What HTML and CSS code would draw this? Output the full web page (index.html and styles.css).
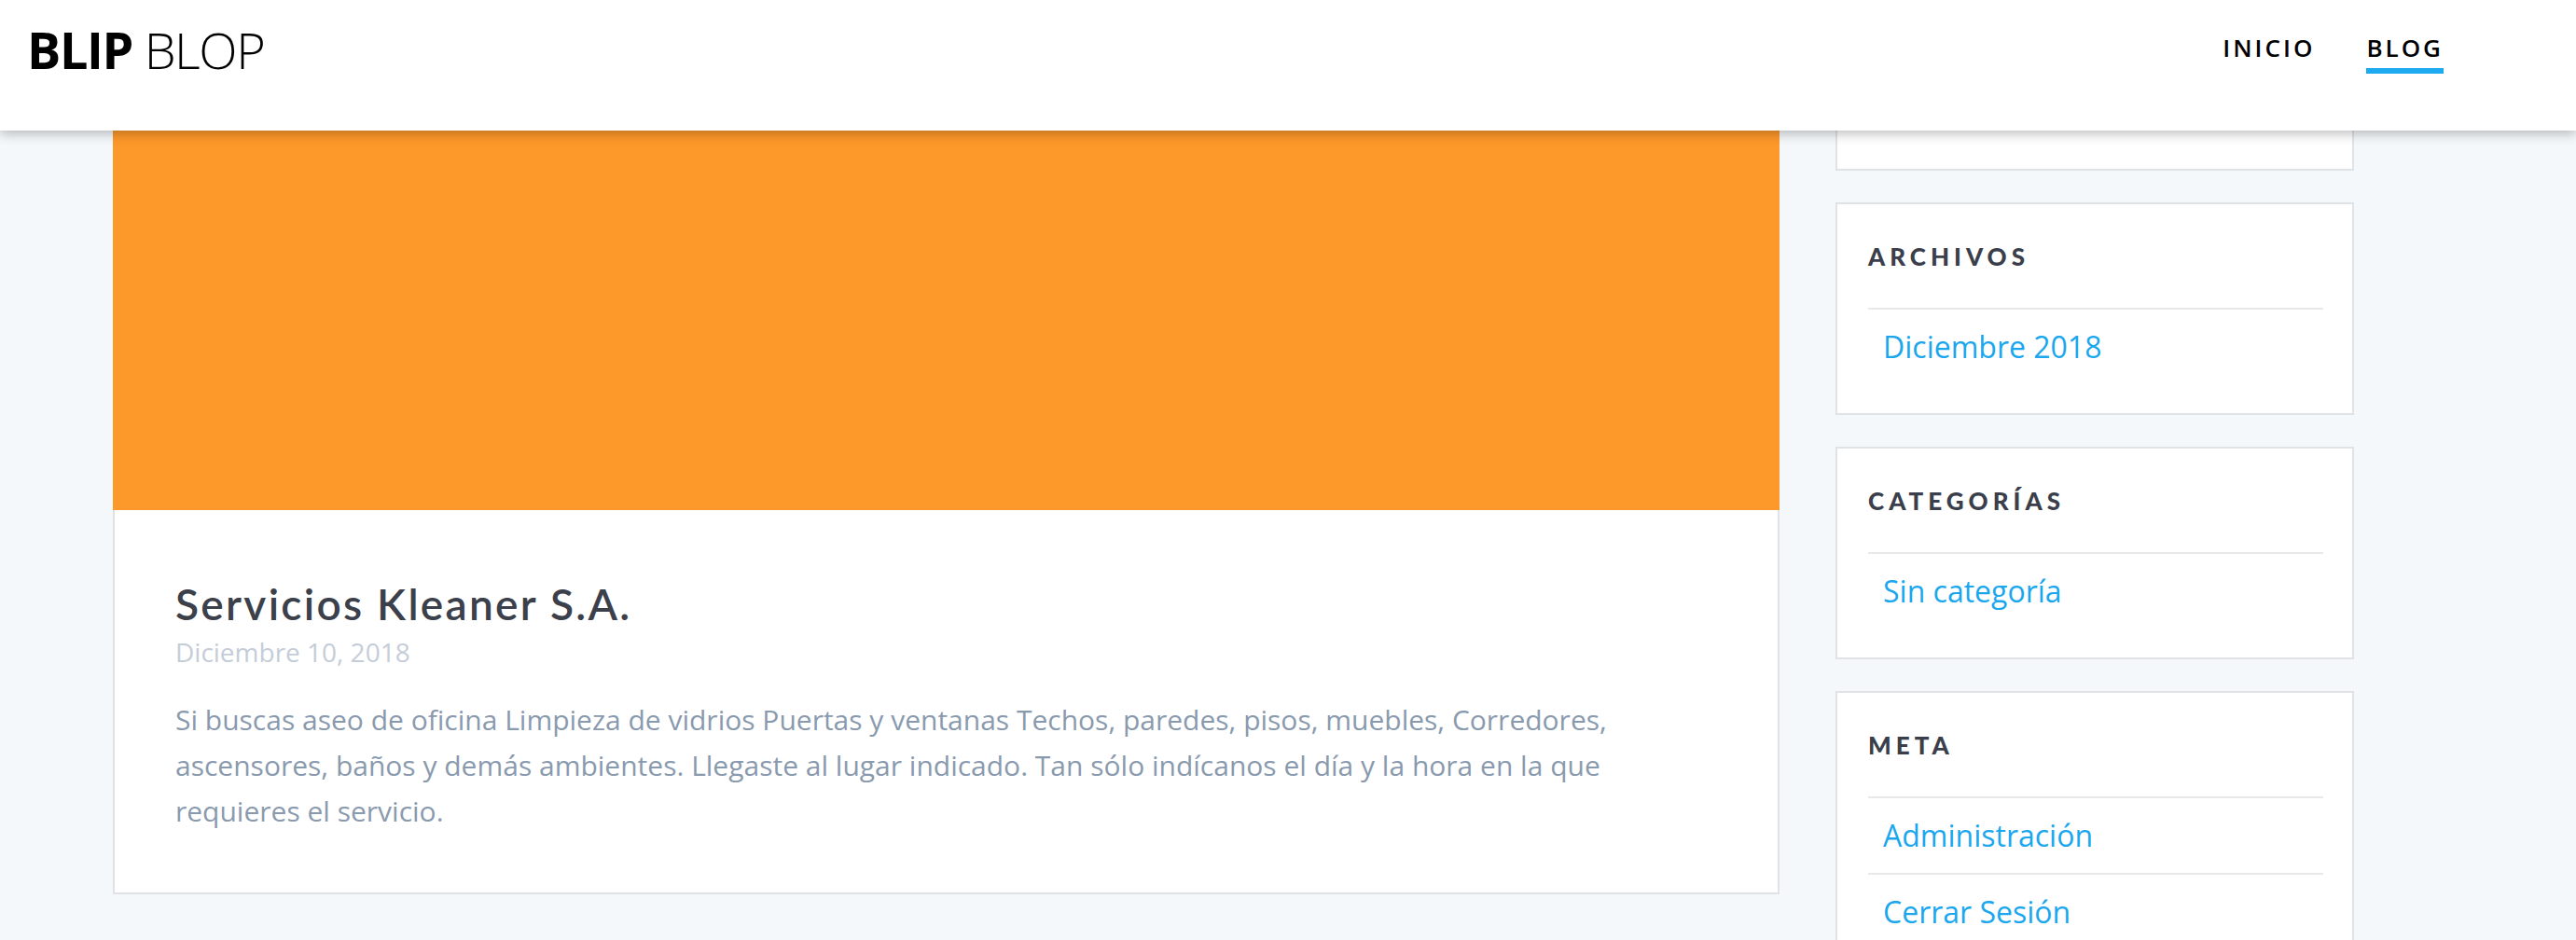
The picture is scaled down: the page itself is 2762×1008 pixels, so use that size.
FILE: index.html
```html
<!DOCTYPE html>
<html lang="es">
<head>
<meta charset="utf-8">
<title>Blog – BLIP BLOP</title>
<link rel="stylesheet" href="styles.css">
</head>
<body>
<header class="site-header">
  <a class="logo" href="#"><span class="logo-bold">BLIP</span> <span class="logo-light">BLOP</span></a>
  <nav class="nav">
    <a class="nav-link" href="#">INICIO</a>
    <a class="nav-link nav-link-active" href="#">BLOG</a>
  </nav>
</header>
<div class="page">
  <main class="main">
    <article class="post">
      <div class="post-image"></div>
      <div class="post-body">
        <h2 class="post-title">Servicios Kleaner S.A.</h2>
        <div class="post-date">Diciembre 10, 2018</div>
        <p class="post-excerpt">Si buscas aseo de oficina Limpieza de vidrios Puertas y ventanas Techos, paredes, pisos, muebles, Corredores, ascensores, baños y demás ambientes. Llegaste al lugar indicado. Tan sólo indícanos el día y la hora en la que requieres el servicio.</p>
      </div>
    </article>
  </main>
  <aside class="sidebar">
    <section class="widget widget-top"></section>
    <section class="widget">
      <h3 class="widget-title">ARCHIVOS</h3>
      <ul class="widget-list">
        <li class="widget-item"><a class="widget-link" href="#">Diciembre 2018</a></li>
      </ul>
    </section>
    <section class="widget">
      <h3 class="widget-title">CATEGORÍAS</h3>
      <ul class="widget-list">
        <li class="widget-item"><a class="widget-link" href="#">Sin categoría</a></li>
      </ul>
    </section>
    <section class="widget">
      <h3 class="widget-title">META</h3>
      <ul class="widget-list">
        <li class="widget-item"><a class="widget-link" href="#">Administración</a></li>
        <li class="widget-item"><a class="widget-link" href="#">Cerrar Sesión</a></li>
      </ul>
    </section>
  </aside>
</div>
</body>
</html>
```

FILE: styles.css
```css
* {
  box-sizing: border-box;
}

html, body {
  margin: 0;
  padding: 0;
  height: 1008px;
  overflow: hidden;
}

body {
  background: #f4f8fb;
  font-family: "Open Sans", "Noto Sans", sans-serif;
  color: #3a3f4b;
}

a {
  text-decoration: none;
}

/* Header */
.site-header {
  position: relative;
  z-index: 2;
  height: 140px;
  background: #ffffff;
  box-shadow: 0 3px 12px rgba(0, 0, 0, 0.28);
  display: flex;
  justify-content: space-between;
  align-items: flex-start;
  padding: 0 142px 0 29px;
}

.logo {
  color: #000000;
  font-family: "Open Sans", sans-serif;
  font-size: 54px;
  line-height: 106px;
  letter-spacing: -1.4px;
  white-space: nowrap;
}

.logo-bold {
  font-weight: 700;
}

.logo-light {
  font-weight: 300;
}

.nav {
  display: flex;
  gap: 55px;
  padding-top: 32px;
}

.nav-link {
  color: #000000;
  font-family: "Open Sans", sans-serif;
  font-weight: 600;
  font-size: 26px;
  letter-spacing: 3px;
  line-height: 38px;
  padding-bottom: 3px;
  border-bottom: 6px solid transparent;
}

.nav-link-active {
  border-bottom-color: #1eaaf1;
}

/* Layout */
.page {
  display: flex;
  align-items: flex-start;
  gap: 60px;
  padding-left: 121px;
}

.main {
  width: 1787px;
  flex: none;
}

.sidebar {
  width: 556px;
  flex: none;
  display: flex;
  flex-direction: column;
  gap: 34px;
}

/* Post card */
.post {
  background: #ffffff;
  border: 2px solid #dfe3e7;
  border-top: 0;
}

.post-image {
  height: 407px;
  background: #fd982a;
  margin: 0 -2px;
}

.post-body {
  padding: 74px 65px 63px;
}

.post-title {
  margin: 0;
  font-family: Lato, "Open Sans", sans-serif;
  font-weight: 600;
  font-size: 46px;
  line-height: 54px;
  letter-spacing: 2.3px;
  color: #3b404b;
}

.post-date {
  margin-top: 3px;
  font-size: 28px;
  line-height: 42px;
  color: #c4cdd8;
}

.post-excerpt {
  margin: 28px 0 0;
  font-size: 30px;
  line-height: 48.75px;
  color: #8a9aae;
}

/* Widgets */
.widget {
  background: #ffffff;
  border: 2px solid #e0e3e6;
  padding: 32px 31px 31px 33px;
}

.widget-top {
  height: 43px;
  border-top: 0;
  padding: 0;
}

.widget-title {
  height: 48px;
  margin: 0 0 31px;
  font-family: Lato, "Open Sans", sans-serif;
  font-weight: 900;
  font-size: 26px;
  line-height: 48px;
  letter-spacing: 5px;
  color: #3a3f4b;
  overflow: visible;
}

.widget-list {
  list-style: none;
  margin: 0;
  padding: 0;
}

.widget-item {
  height: 82px;
  border-top: 2px solid #e6e8ea;
  padding: 0 16px;
  line-height: 80px;
  overflow: hidden;
}

.widget-link {
  font-size: 32px;
  color: #1aa7ee;
}
```
